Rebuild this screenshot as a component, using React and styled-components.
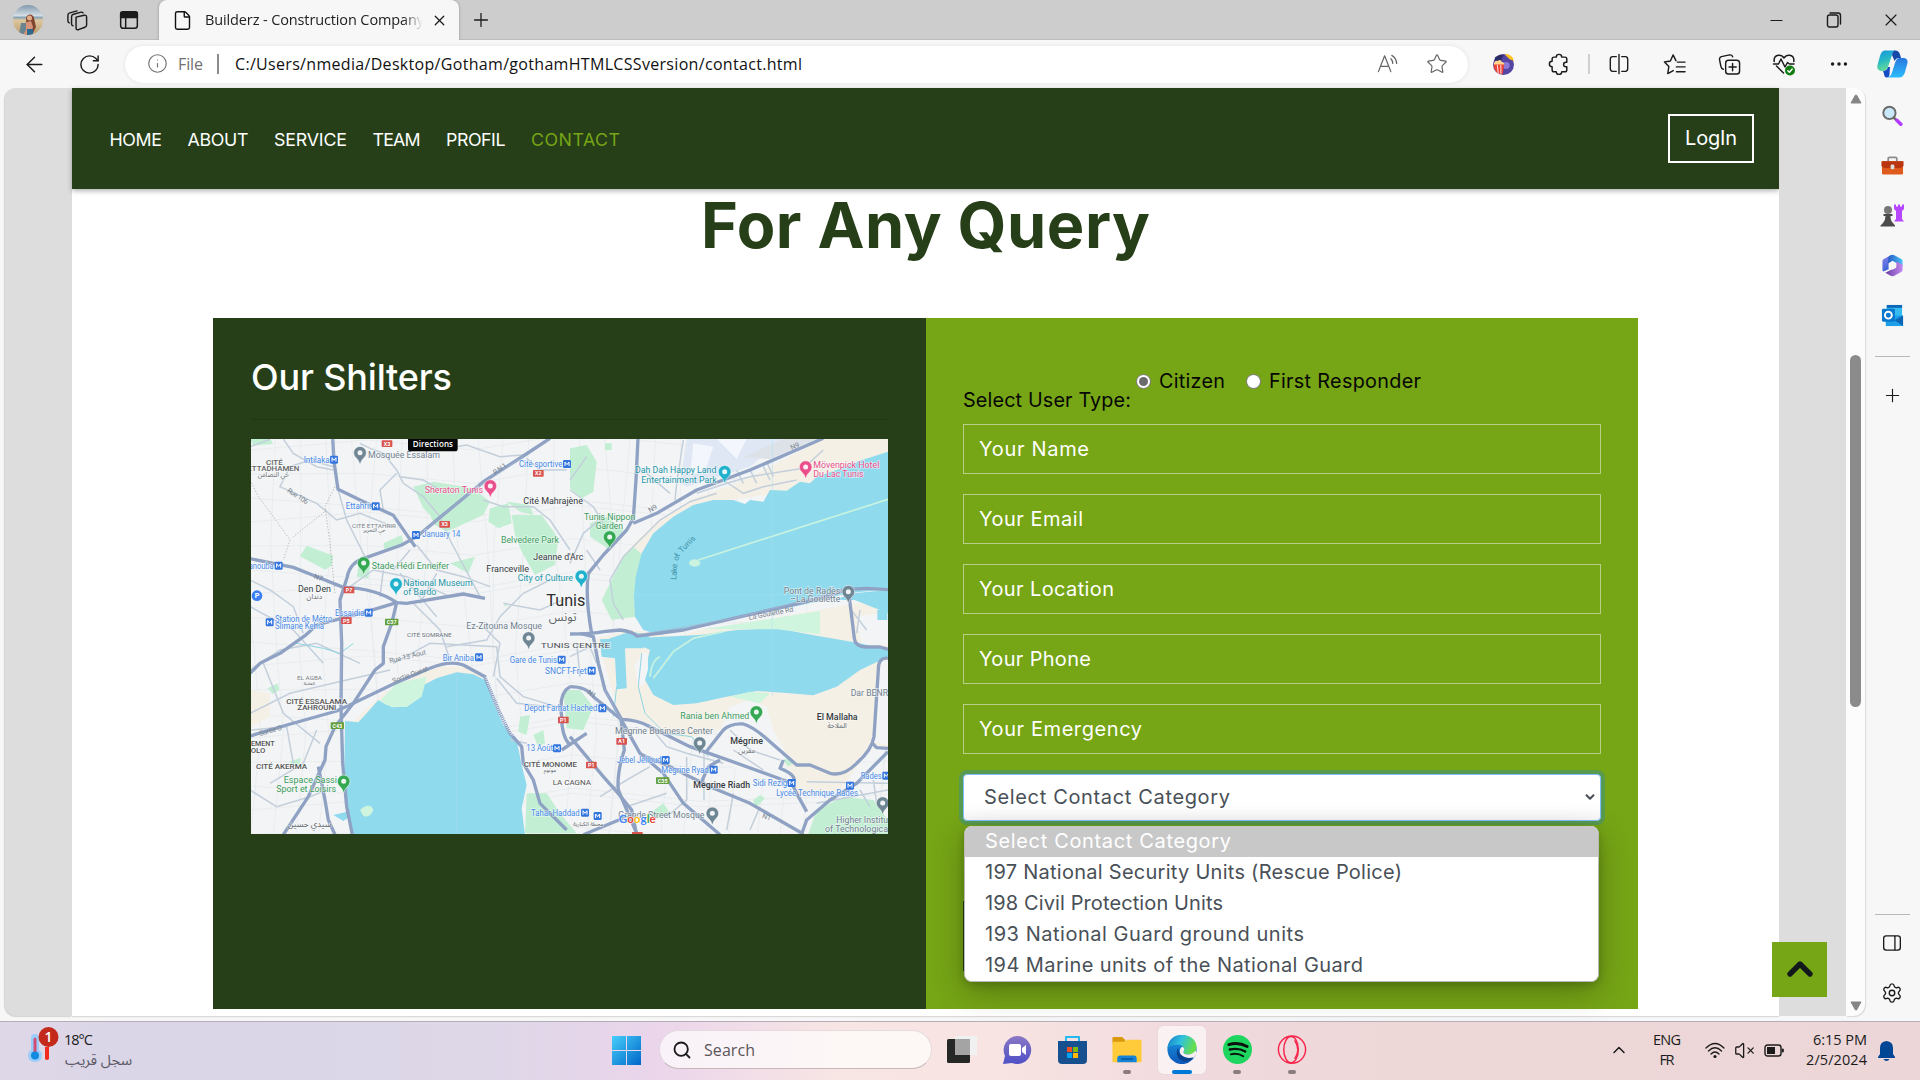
import React, { useLayoutEffect, useRef, useState } from "react";
import styled, { createGlobalStyle } from "styled-components";
import {
  ArrowLeft, RotateCw, Info, Star, Plus, X, File, Search, ChevronUp, ChevronDown,
  VolumeX, Settings, Minus, Ellipsis,
} from "lucide-react";

const GREEN = "#76a516";
const DARK = "#263f18";
const UI = `"Open Sans", "Noto Sans", "DejaVu Sans", sans-serif`;
const BRAND = `Inter, "Open Sans", sans-serif`;

const Global = createGlobalStyle`
  * { box-sizing: border-box; }
  body { margin: 0; overflow: hidden; background: #f7f7f7; font-family: ${UI}; }
`;

/* ---------- text tracked to a known measure ---------- */
const Tracked = styled.span`
  display: block;
  flex: none;
  white-space: nowrap;
  font-family: ${(p) => (p.$ui ? UI : BRAND)};
  font-size: ${(p) => p.$size}px;
  font-weight: ${(p) => p.$weight || 400};
  color: ${(p) => p.$color || "inherit"};
  line-height: ${(p) => p.$lh || 30}px;
`;
function Text({ children, w, ...rest }) {
  const ref = useRef(null);
  const [ls, setLs] = useState(0);
  useLayoutEffect(() => {
    const range = document.createRange();
    range.selectNodeContents(ref.current);
    const natural = range.getBoundingClientRect().width;
    setLs((w - natural) / (String(children).length - 1));
  }, [children, w]);
  return (
    <Tracked ref={ref} {...rest} style={{ letterSpacing: `${ls}px`, width: `${w}px` }}>
      {children}
    </Tracked>
  );
}

/* ---------- window frame ---------- */
const Screen = styled.div`
  width: 1920px; height: 1080px; display: flex; flex-direction: column; overflow: hidden;
`;
const TabStrip = styled.div`
  height: 40px; background: #cdcdcd; display: flex; align-items: center; color: #111;
  box-shadow: inset 0 -1px 0 #bdbdbd;
`;
const Slot = styled.div`
  width: ${(p) => p.$w}px; height: ${(p) => p.$h || 40}px; flex: none;
  display: flex; align-items: center; justify-content: center; color: ${(p) => p.$color || "#1b1b1b"};
`;
const ActiveTab = styled.div`
  width: 300px; height: 40px; background: #f7f7f7; border-radius: 8px 8px 0 0; display: flex; align-items: center;
  padding-left: 13px; box-shadow: 0 0 3px rgba(0,0,0,.3); clip-path: inset(-4px -4px 0 -4px);
`;
const TabTitle = styled.div`
  width: 220px; margin-left: 12px; overflow: hidden; mask-image: linear-gradient(90deg, #000 90%, transparent 99%);
`;
const Grow = styled.div`flex: 1;`;
const Toolbar = styled.div`
  height: 48px; background: #f7f7f7; display: flex; align-items: center; padding-left: 7px;
`;
const Address = styled.div`
  width: 1343px; height: 37px; margin-left: 8px; background: #fff; border-radius: 19px; display: flex; align-items: center;
  padding: 0 0 1px 22px; box-shadow: 0 0 4px rgba(0,0,0,.09);
`;
const VLine = styled.div`
  width: 2px; height: 20px; flex: none; background: ${(p) => p.$color}; margin: ${(p) => p.$m};
`;
const Workspace = styled.div`height: 933px; display: flex; background: #f7f7f7; padding-left: 5px;`;
const Gutter = styled.div`
  width: 67px; height: 928px; background: #ddd; border-radius: ${(p) => (p.$left ? "10px 0 0 12px" : "0")};
  box-shadow: ${(p) => (p.$left ? "-1px 1px 1px #d3d3d3" : "none")};
`;
const Page = styled.main`width: 1707px; height: 928px; background: #fff; box-shadow: 0 1px 1px #d9d9d9;`;
const ScrollTrack = styled.div`
  width: 19px; height: 928px; background: #fcfcfc; border-radius: 0 10px 12px 0; box-shadow: 1px 1px 1px #d9d9d9;
  display: flex; flex-direction: column; align-items: center; padding: 6px 0 5px;
`;
const Thumb = styled.div`width: 11px; height: 352px; border-radius: 6px; background: #8b8b8b; margin: 251px 0 auto;`;
const Side = styled.aside`
  width: 55px; height: 933px; display: flex; flex-direction: column; align-items: center; padding: 2px 1px 3px 0;
`;
const SideLine = styled.div`width: 35px; height: 1px; flex: none; background: #b9b9b9; margin: ${(p) => p.$m};`;

/* ---------- site ---------- */
const SiteHeader = styled.header`
  height: 101px; background: ${DARK}; color: #fff; display: flex; align-items: center; justify-content: space-between;
  padding: 2px 25px 0 37.5px; box-shadow: 0 2px 5px rgba(0,0,0,.3);
`;
const Nav = styled.nav`display: flex; gap: 25.5px;`;
const Login = styled.button`
  width: 86px; height: 49px; border: 2px solid #fff; background: none; color: #fff; padding: 0 0 2px; margin-bottom: 2px;
  display: flex; align-items: center; justify-content: center;
`;
const Heading = styled.div`height: 129px; display: flex; justify-content: center;`;
const Panels = styled.div`width: 1425px; height: 691px; margin-left: 141px; display: grid; grid-template-columns: 713px 712px;`;
const Shelters = styled.section`background: ${DARK}; color: #fff; padding: 37px 37px 0 38px;`;
const Rule = styled.div`height: 1px; background: rgba(0,0,0,.1); margin: 20px 0 19px;`;
const FormPanel = styled.section`background: ${GREEN}; padding: 48px 37px 0; color: #060606;`;
const UserType = styled.div`height: 58px; display: flex; align-items: flex-start;`;
const Lowered = styled.div`padding-top: 19px; margin-right: 4px;`;
const Radio = styled.i`
  width: 15px; height: 15px; border-radius: 50%; border: 1px solid #767676; background: #fff; margin: 8px 8px 0 0;
  display: grid; place-items: center;
  &::after { content: ""; width: 9px; height: 9px; border-radius: 50%; background: ${(p) => (p.$on ? "#6b6b6b" : "#fff")}; }
`;
const Gap = styled.div`width: ${(p) => p.$w}px; flex: none;`;
const Field = styled.div`
  height: 50px; border: 1px solid rgba(255,255,255,.48); margin-bottom: 20px; padding-left: 15px; color: #fff;
  display: flex; align-items: center;
`;
const Select = styled.div`
  height: 47px; background: #fff; border: 1px solid #80bdff; border-radius: 4px; box-shadow: 0 0 0 4px rgba(0,123,255,.25), inset 0 -14px 14px -10px rgba(0,0,0,.05);
  position: relative; display: flex; align-items: center; justify-content: space-between; padding: 0 3px 1px 20px; color: #495057;
`;
const Menu = styled.div`
  position: absolute; left: 0; top: 51px; width: 635px; height: 156px; border-radius: 8px; background: #fff; overflow: hidden; z-index: 2;
  border: 1px solid #b9b9b9; border-top: 0;
`;
const MenuShadow = styled.div`
  position: absolute; left: 0; top: 51px; width: 635px; height: 156px; border-radius: 8px; z-index: 1;
  box-shadow: 0 10px 32px rgba(0,0,0,.26), 0 3px 8px rgba(0,0,0,.16);
`;
const Option = styled.div`
  height: 31px; padding-left: 20px; background: ${(p) => (p.$on ? "#c8c8c8" : "#fff")}; color: ${(p) => (p.$on ? "#fff" : "#495057")};
`;
const Submit = styled.div`width: 200px; height: 70px; margin-top: 80px; background: ${DARK};`;
const BackTop = styled.button`
  position: absolute; left: 1772px; top: 942px; width: 55px; height: 55px; border: 0; padding: 0 0 2px; background: ${GREEN};
  display: grid; place-items: center; color: #12181b;
`;

/* ---------- taskbar ---------- */
const Taskbar = styled.footer`
  height: 59px; border-top: 1px solid #b3aeb8; position: relative; z-index: 3; display: flex; align-items: stretch; color: #1b1b1b;
  background: linear-gradient(90deg, #ded7e8 0, #dad6e7 8%, #ddd7e8 25%, #ead5eb 34%, #f8e6e4 44%, #f8e4e2 52%, #f1dadf 62%, #edd7d7 72%, #ecd6d7 100%);
`;
const Weather = styled.div`width: 612px; display: flex; padding: 5px 0 0 28px;`;
const WeatherText = styled.div`padding-top: 2px;`;
const Arabic = styled.div`font: 400 14.5px/20px "Noto Sans Arabic", "DejaVu Sans", sans-serif; color: #5b5966; direction: rtl; width: 68px; white-space: nowrap;`;
const SearchBox = styled.div`
  width: 273px; height: 39px; margin: 8px 4px 0 18px; border-radius: 20px; background: rgba(255,255,255,.68);
  border: 1px solid rgba(190,165,175,.35); border-bottom-color: #c9b6bb; display: flex; align-items: center; padding-left: 12px;
`;
const AppIcon = styled.div`
  width: 48px; height: 48px; margin: 4px 7px 0 0; border-radius: 5px; display: flex; flex-direction: column; align-items: center; padding-top: 9px;
  background: ${(p) => (p.$active ? "rgba(255,255,255,.6)" : "none")};
  box-shadow: ${(p) => (p.$active ? "0 0 1px #c5aeb4" : "none")};
`;
const Dot = styled.i`
  width: ${(p) => (p.$active ? 20 : 8)}px; height: 4px; border-radius: 2px; background: ${(p) => (p.$active ? "#0078d7" : "#8b7c80")};
  margin-top: 6px;
`;
const Stack = styled.div`
  display: flex; flex-direction: column; align-items: ${(p) => p.$align || "center"}; padding-top: 8px; width: ${(p) => p.$w}px;
`;

/* ---------- small drawings ---------- */
const Svg = ({ w = 24, h = w, vb = "0 0 24 24", children, sw = 1.4 }) => (
  <svg width={w} height={h} viewBox={vb} fill="none" stroke="currentColor" strokeWidth={sw} strokeLinecap="round" strokeLinejoin="round">
    {children}
  </svg>
);
const N = { stroke: "none" };
const Avatar = () => (
  <Svg w={30} vb="0 0 30 30">
    <defs>
      <clipPath id="av"><circle cx="15" cy="15" r="15" /></clipPath>
      <linearGradient id="avs" x2="0" y2="1"><stop stopColor="#8198ae" /><stop offset=".35" stopColor="#d3dde3" /><stop offset=".42" stopColor="#86a3b5" /><stop offset=".5" stopColor="#ddc8a0" /><stop offset="1" stopColor="#b99a6d" /></linearGradient>
    </defs>
    <g clipPath="url(#av)" {...N}>
      <rect width="30" height="30" fill="url(#avs)" />
      <path d="M13 13c2-5 7-4 8 0l2 9-3 6h-6z" fill="#80452f" /><circle cx="16.5" cy="13" r="2.5" fill="#e4ae8b" />
      <path d="M11 18l7-2 2 6-3 8h-6z" fill="#d6957a" /><path d="M8 18h5v7l-3 5H6z" fill="#6b8590" /><path d="M14 24h6v6h-6z" fill="#2d6a8d" />
    </g>
  </Svg>
);
const Workspaces = () => (
  <Svg w={23}><path d="M10.5 8.5L19 6.5q2.5-.5 2.5 2v8.2q0 1.8-1.8 2.3l-6.7 2.6q-2.5.7-2.5-2zM7.3 17.5q-1.5 0-1.5-2V8q0-2 2-2.5l8-2.2q1.4-.2 2 .8M3.5 14.5Q2 14.300 2 12.500V6.500q0-2 2-2.500l7.500-2" strokeWidth="1.5" /></Svg>
);
const TabMenu = () => (
  <Svg w={20} sw={1.8}><rect x="2" y="2.500" width="20" height="19.500" rx="3" /><path d="M2 4q0-2 3-2h14q3 0 3 2v5H2z" fill="currentColor" /><path d="M8 9v12" /></Svg>
);
const ReadAloud = () => (
  <Svg w={23} sw={1.3}><path d="M2.500 20.500L9 4l6.500 16.500M5 15h8M15.500 7q2 2 2 5M16.500 3.500q5 3 5 8.500" /></Svg>
);
const ExtLogo = () => (
  <Svg w={21}><g {...N}><circle cx="12" cy="12" r="12" fill="#5546a4" /><path d="M14 0q8 0 10 8l-5-2-5-5z" fill="#ffc31f" /><path d="M2 4q5-4 10-3L9 8l-6 1z" fill="#2b2b66" /><circle cx="15" cy="13" r="4" fill="#8c7bd9" /><path d="M1 11h12l-2 12q-8 0-10-8z" fill="#ef4136" /><path d="M1 11q1-4 4-3 4-3 5 1 3 0 3 3H1z" fill="#ffd48d" /><path d="M5 13l1 9M9 13v9" stroke="#fff" strokeWidth="1" /></g></Svg>
);
const Extensions = () => (
  <Svg w={22} sw={1.6}><path d="M9 4.500a3 3 0 0 1 6 0h3.500q2 0 2 2V10h-1a2.500 2.500 0 0 0 0 5h1v3.500q0 2-2 2H15a3 3 0 0 1-6 0H6.500q-2 0-2-2V15a3 3 0 0 1 0-6V6.500q0-2 2-2z" /></Svg>
);
const Split = () => (
  <Svg w={22} sw={1.5}><path d="M9 4H5Q2.500 4 2.500 7v10q0 3 2.500 3h4M15 4h4q2.500 0 2.500 3v10q0 3-2.500 3h-4M12 1.500v21" /></Svg>
);
const Favs = () => (
  <Svg w={23} sw={1.5}><path d="M13.500 8L10.500 2 7.700 8.400 1.500 9.400l4.600 4.700L5 21.500l5.700-3.200M15 9.500h8M14 14.500h9M14 19.500h9" /></Svg>
);
const Collections = () => (
  <Svg w={23} sw={1.5}><rect x="8" y="7.500" width="14.500" height="14.500" rx="3" /><path d="M15.200 11v7.500M11.500 14.700H19M5.500 17Q3.500 16.500 3 14L1.600 7Q1.300 4.500 3.600 3.800L12 2q2.500-.3 3.300 2" /></Svg>
);
const Heart = () => (
  <Svg w={24} sw={1.5}><path d="M2.200 9.500Q1.500 4 6.500 3.300 10 3 12 6q2-3 5.500-2.700 5 .7 4.300 6.200M4.500 14l7 7M1.500 12h5l2.500-5 4 8 2.500-4.500L17.500 12H22" /><circle cx="18" cy="18.500" r="5" fill="#107c10" stroke="none" /><path d="M15.800 18.700l1.600 1.500 2.800-3.200" stroke="#fff" /></Svg>
);
const Copilot = () => (
  <Svg w={31} h={28} vb="0 0 31 28">
    <defs>
      <linearGradient id="c1" x2=".3" y2="1"><stop stopColor="#1494df" /><stop offset=".5" stopColor="#27b7c5" /><stop offset="1" stopColor="#65db96" /></linearGradient>
      <linearGradient id="c2" x2="0" y2="1"><stop stopColor="#2777dc" /><stop offset="1" stopColor="#2bbcff" /></linearGradient>
    </defs>
    <g {...N}>
      <path d="M22 8h5q4 .5 3.500 5l-2.500 9q-1.500 5.500-6 5.500H9.500q4 0 5.500-5l3.500-11q1-3 3.500-3.500z" fill="url(#c2)" />
      <path d="M8 .5h11q-3 .5-4 4.500l-4 12q-1 4-5 4H3.500Q-.5 20 .5 15l2.500-9Q4.500.5 8 .5z" fill="url(#c1)" />
      <path d="M18 .5q4 0 5 4l1 3.500h-2q-3 0-4.500 3L15 5q1-4.500 3-4.500z" fill="#1747a8" />
      <path d="M6 21q4 0 5-4l2 0-.5 7q0 3.500-3 3.500-2 0-2.500-3.500z" fill="#174cc5" />
    </g>
  </Svg>
);
const MagColor = () => (
  <Svg w={21}><circle cx="8.500" cy="9" r="7" fill="#c9e9fb" stroke="#6c6c6c" strokeWidth="2.200" /><path d="M14 15l1.500 1.500" stroke="#666" strokeWidth="3" /><path d="M17 17.500l4.500 4.500" stroke="#b438ff" strokeWidth="4" /></Svg>
);
const Toolbox = () => (
  <Svg w={23}><path d="M7.500 8V5q0-1.500 1.500-1.500h6q1.500 0 1.500 1.500v3" stroke="#8b8b8b" strokeWidth="1.800" /><g {...N}><rect x="1" y="7.500" width="22" height="14" rx="1.500" fill="#de5a1d" /><path d="M.500 7.500h23v5l-3 2h-17l-3-2z" fill="#b93610" /><rect x="10" y="11" width="4" height="5" rx="1.500" fill="#ddd" /></g></Svg>
);
const Games = () => (
  <Svg w={24}><g {...N}><path d="M14 1.500h2v2h2v-2h2v2h2v-2h2V6l-2 2v8l2 2.500H14L16 16V8l-2-2z" fill="#b646ff" /><circle cx="8" cy="7" r="4" fill="#777" /><path d="M3.500 11h9v2h-2q0 5 2.500 7l2 2.500v1H.500v-1L3 20q2.500-3 2.500-7h-2z" fill="#4b4b4b" /></g></Svg>
);
const M365 = () => (
  <Svg w={23}>
    <defs>
      <linearGradient id="m1" x2="1"><stop stopColor="#2b5cc4" /><stop offset="1" stopColor="#45c4f7" /></linearGradient>
      <linearGradient id="m2" x2="1"><stop stopColor="#6a3fa8" /><stop offset="1" stopColor="#c38bf0" /></linearGradient>
      <linearGradient id="m3" x2=".4" y2="1"><stop stopColor="#8f86e8" /><stop offset="1" stopColor="#3a62d8" /></linearGradient>
    </defs>
    <g {...N}>
      <path d="M11 .8L2.500 5.600Q1.500 6.200 1.500 7.500v9.300q0 1 1 1.500L8 16V9.500z" fill="url(#m3)" />
      <path d="M9.500 1.500q2.500-1.400 5 0l7 4q1 .7 1 2V13l-7-4-3.500-2-4.500 3V4.500q0-2 2-3z" fill="url(#m1)" />
      <path d="M22.500 11v5.500q0 1.300-1 2l-7 4q-2.500 1.500-5 0l-5-3 7-3.500 4.500-3V7.800z" fill="url(#m2)" />
      <path d="M12 7.700l3.800 2.200v4.400L12 16.500l-3.800-2.200V9.900z" fill="#f7f7f7" />
    </g>
  </Svg>
);
const Outlook = () => (
  <Svg w={23}><g {...N}><rect x="6" y="1" width="16" height="15" rx="1" fill="#35bdf2" /><path d="M6 1h16v3H6z" fill="#0d69b8" /><path d="M5 12l18 0v11H5z" fill="#1ca0e8" /><path d="M23 12v11l-9-6z" fill="#0b67b5" /><rect x="1" y="5" width="13.500" height="13.500" rx="1.500" fill="#0877cf" /></g><circle cx="7.700" cy="11.700" r="3.600" stroke="#fff" strokeWidth="2" /></Svg>
);
const SidePanel = () => (
  <Svg w={20} sw={1.6}><rect x="2" y="3.500" width="20" height="17" rx="3" /><path d="M15.500 4v16" /></Svg>
);
const Therm = () => (
  <Svg w={32} h={36} vb="0 0 32 36">
    <g {...N}><path d="M3 11q0-4 4-4t4 4v12q3 2 3 5.500Q14 35 7 35T0 28.500Q0 25 3 23z" fill="#9bcdfb" /><path d="M5.500 12q1.500-3 3 0v13h-3z" fill="#d04c72" /><circle cx="7" cy="28.500" r="4" fill="#0e8ae0" /><path d="M17 20h4v12q-2 2-4 0z" fill="#f22b1f" /><circle cx="20.500" cy="10" r="10" fill="#c32a1b" /></g>
    <text x="20.500" y="15" textAnchor="middle" fontFamily="Open Sans" fontSize="14" fontWeight="600" fill="#fff" stroke="none">1</text>
  </Svg>
);
const Windows = () => (
  <Svg w={29} vb="0 0 29 29"><defs><linearGradient id="wn" x2="1" y2="1"><stop stopColor="#46cefa" /><stop offset="1" stopColor="#0066c8" /></linearGradient></defs><path {...N} fill="url(#wn)" d="M0 0h14v14H0zM15 0h14v14H15zM0 15h14v14H0zM15 15h14v14H15z" /></Svg>
);
const TaskView = () => (
  <Svg w={30} vb="0 0 30 30"><g {...N}><rect x="0" y="4" width="23" height="24" rx="1.500" fill="#262827" /><rect x="8" y="1" width="22" height="19" rx="1.500" fill="#f1f1f1" /><path d="M8 4h15v16H8z" fill="#a4a4a4" /></g></Svg>
);
const Chat = () => (
  <Svg w={30} vb="0 0 30 30"><defs><linearGradient id="ch" x2="0" y2="1"><stop stopColor="#8b78c5" /><stop offset="1" stopColor="#4e50c6" /></linearGradient></defs><g {...N}><path d="M15 1a14 14 0 1 1-5 27l-9 1 2-8A14 14 0 0 1 15 1z" fill="url(#ch)" /><rect x="7" y="9" width="12" height="12" rx="2" fill="#fff" /><path d="M20 13l4-3v10l-4-3z" fill="#fff" /></g></Svg>
);
const Store = () => (
  <Svg w={30} vb="0 0 30 30"><path d="M9 7V2h13v5" stroke="#24b9ef" strokeWidth="2" /><g {...N}><path d="M1 6h29v19q0 4-4 4H5q-4 0-4-4z" fill="#16508e" /><path fill="#f25022" d="M10 12h5v5h-5z" /><path fill="#7fba00" d="M16 12h5v5h-5z" /><path fill="#00a4ef" d="M10 18h5v5h-5z" /><path fill="#ffb900" d="M16 18h5v5h-5z" /></g></Svg>
);
const Folder = () => (
  <Svg w={30} vb="0 0 30 30"><g {...N}><path d="M0 3q0-1 1-1h9l3 3v4H0z" fill="#d9990c" /><path d="M0 7h12l3-2h14q1 0 1 1v21q0 1-1 1H1q-1 0-1-1z" fill="#ffcb3b" /><path d="M5 28v-4q0-3 3-3h14q3 0 3 3v4z" fill="#1384d7" /><path d="M9 24h12v1.500H9z" fill="#075495" /></g></Svg>
);
const Edge = () => (
  <Svg w={30} vb="0 0 30 30">
    <defs><linearGradient id="e1" x2="1" y2=".3"><stop stopColor="#1679c4" /><stop offset=".5" stopColor="#2fc1df" /><stop offset="1" stopColor="#65df4c" /></linearGradient><linearGradient id="e2" x2="0" y2="1"><stop stopColor="#1d9be2" /><stop offset="1" stopColor="#0b57b8" /></linearGradient></defs>
    <g {...N}>
      <circle cx="15" cy="15" r="15" fill="url(#e2)" />
      <path d="M0 13Q2 0 15 0q14 1 15 12 0 8-9 8-6 0-4-4 1-6-7-6-6 0-10 3z" fill="url(#e1)" />
      <path d="M17 16q-2 4 4 4 5 0 8-4l1 3-3 5-5 0q-7-1-9-5-1-5 2-7 3 1 2 4z" fill="#f8eff1" />
      <path d="M11 13q-4 8 3 13 7 4 13-3-6 2-11-1-5-3-5-9z" fill="#0a438f" />
    </g>
  </Svg>
);
const Spotify = () => (
  <Svg w={29} vb="0 0 30 30"><circle cx="15" cy="15" r="15" fill="#1ed65f" stroke="none" /><g stroke="#0b120d"><path d="M6 10q10-3 19 2" strokeWidth="3" /><path d="M7 15q9-2 16 2" strokeWidth="2.500" /><path d="M8 20q7-2 13 2" strokeWidth="2" /></g></Svg>
);
const Opera = () => (
  <Svg w={30} vb="0 0 30 30" sw={1.5}><g stroke="#f8264c"><circle cx="15" cy="15" r="14" /><ellipse cx="14" cy="15" rx="7.500" ry="13.500" /><path d="M18 6q6 9 0 18" /></g></Svg>
);
const WifiGlyph = () => (
  <Svg w={20} h={17} vb="0 0 20 17" sw={1.3}><path d="M1 6q9-9 18 0M3.500 9q6.500-6.500 13 0M6 12q4-4 8 0" /><circle cx="10" cy="14.500" r="1.600" fill="currentColor" stroke="none" /></Svg>
);
const Battery = () => (
  <Svg w={20} h={13} vb="0 0 20 13" sw={1.4}><rect x="1" y="1" width="16" height="11" rx="2.500" /><rect x="3" y="3" width="8" height="7" fill="currentColor" stroke="none" /><path d="M18.800 5.500v2" strokeWidth="2" /></Svg>
);
const BellGlyph = () => (
  <Svg w={17} h={20} vb="0 0 17 20"><path {...N} fill="#004695" d="M8.500 0Q15 .5 15 7v6l2 3v1H0v-1l2-3V7Q2 .5 8.500 0zM5.500 18h6q-1 2-3 2t-3-2z" /></Svg>
);

/* ---------- map ---------- */
const WATER = "#90daee", PARK = "#c2efd3", SAND = "#f5f0e5", ROAD = "#8fa2c4", MINOR = "#c3cfdb";
const BLUE = "#4689e8", GRN = "#3c9b5b", TEAL = "#2396a8", PINK = "#ea4f8b", GREY = "#71818f", INK = "#353a40";

// [text, x, baseline, width, size, colour, weight]
const LABELS = [
  ["Mosquée Essalam", 354, 83, 216, 27, GREY], ["Intilaka", 161, 98, 78, 25, BLUE],
  ["CITÉ", 48, 106, 50, 21, "#666", 500], ["ETTADHAMEN", -8, 124, 156, 21, "#666", 500],
  ["Ettahrir", 287, 238, 78, 25, BLUE], ["CITÉ ETTAHRIR", 306, 293, 132, 18, "#7d858c"],
  ["January 14", 517, 322, 114, 26, BLUE], ["Sheraton Tunis", 524, 189, 175, 27, PINK],
  ["Cité sportive", 807, 111, 130, 25, BLUE], ["Cité Mahrajène", 820, 223, 179, 26, INK],
  ["Belvedere Park", 753, 340, 174, 26, GRN], ["Jeanne d'Arc", 850, 389, 150, 26, INK],
  ["Franceville", 709, 426, 128, 26, INK], ["City of Culture", 803, 454, 166, 26, TEAL],
  ["Stade Hédi Enneifer", 365, 417, 232, 27, GRN], ["National Museum", 460, 468, 208, 27, TEAL], ["of Bardo", 460, 494, 99, 27, TEAL],
  ["anouba", -4, 416, 75, 25, BLUE], ["Den Den", 144, 486, 99, 27, INK], ["Tunis", 889, 527, 117, 47, "#2c2c2c"],
  ["Station de Métro", 75, 575, 172, 25, BLUE], ["Slimane Kehia", 75, 598, 147, 25, BLUE],
  ["Essaidia", 255, 557, 88, 25, BLUE], ["Ez-Zitouna Mosque", 649, 597, 227, 27, GREY], ["CITÉ SOMRANE", 471, 620, 134, 18, "#6c747b"],
  ["Dah Dah Happy Land", 1155, 130, 244, 27, TEAL], ["Entertainment Park", 1174, 158, 226, 27, TEAL],
  ["Mövenpick Hotel", 1690, 113, 198, 26, PINK], ["Du Lac Tunis", 1690, 141, 151, 26, PINK],
  ["Tunis Nippon", 1002, 269, 154, 26, GRN], ["Garden", 1037, 298, 82, 26, GRN],
  ["Pont de Radès", 1601, 492, 170, 26, GREY], ["–La Goulette", 1621, 517, 150, 26, GREY],
  ["OLO", 2, 969, 44, 21, "#555", 500], ["EMENT", 3, 948, 71, 21, "#555", 500],
  ["CITÉ ESSALAMA", 109, 821, 182, 21, "#555", 500], ["ZAHROUNI", 142, 839, 117, 21, "#555", 500],
  ["EL AGBA", 141, 751, 75, 18, "#7b8084"], ["CITÉ AKERMA", 18, 1016, 153, 22, "#555", 500],
  ["Espace Sassi", 101, 1060, 160, 27, GRN], ["Sport et Loisirs", 79, 1086, 179, 27, GRN],
  ["Bir Aniba", 578, 692, 94, 25, BLUE], ["Gare de Tunis", 779, 698, 142, 25, BLUE], ["TUNIS CENTRE", 872, 654, 209, 24, "#50565c"],
  ["SNCFT-Fret", 885, 731, 125, 25, BLUE], ["Depot Farhat Hached", 823, 843, 219, 25, BLUE],
  ["13 Août", 829, 963, 80, 25, BLUE], ["CITÉ MONOME", 821, 1012, 160, 21, "#555", 500], ["LA CAGNA", 908, 1065, 115, 21, "#555"],
  ["Tahar Haddad", 843, 1157, 146, 25, BLUE], ["Rania ben Ahmed", 1291, 866, 207, 26, GRN],
  ["Megrine Business Center", 1095, 911, 294, 26, GREY], ["Mégrine", 1441, 943, 98, 26, INK, 500],
  ["El Mallaha", 1700, 869, 123, 26, INK, 500], ["Dar BENR", 1802, 798, 112, 26, GREY],
  ["Jebel Jelloud", 1101, 998, 133, 25, BLUE], ["Megrine Ryad", 1234, 1028, 142, 25, BLUE],
  ["Megrine Riadh", 1330, 1073, 170, 27, INK, 500], ["Sidi Rezig", 1508, 1067, 104, 25, BLUE],
  ["Lycée Technique Rades", 1579, 1098, 245, 25, BLUE], ["Rades", 1832, 1046, 63, 25, BLUE],
  ["Grande Street Mosque", 1105, 1164, 258, 26, GREY], ["Higher Institu", 1759, 1179, 155, 26, GREY], ["of Technologica", 1725, 1205, 189, 26, GREY],
];
const ARABIC = [
  ["حي التضامن", 70, 142, 19], ["دندان", 193, 508, 21], ["تونس", 938, 572, 36], ["حي التحرير", 373, 307, 16], ["الملاحة", 1761, 893, 21],
  ["مقرين", 1490, 968, 21], ["سيدي حسين", 178, 1190, 25], ["العقبة", 178, 765, 14], ["مونوم", 900, 1026, 17], ["محطة الكبارية", 1015, 1188, 17],
];
// metro stops
const STOPS = [[252, 89], [377, 229], [498, 315], [86, 407], [356, 548], [59, 577], [951, 102], [687, 682], [935, 689], [1025, 722], [1057, 835],
  [921, 955], [1247, 990], [1391, 1019], [1625, 1059], [1800, 1067], [1909, 1037], [1005, 1148], [1043, 1158]];
const SHIELDS = [["X3", 411, 41, "#d9534f"], ["X2", 865, 130, "#d9534f"], ["X3", 584, 283, "#d9534f"], ["P7", 297, 480, "#d9534f"], ["P5", 289, 572, "#d9534f"],
  ["C37", 425, 576, "#62a03e"], ["C43", 262, 887, "#62a03e"], ["P1", 940, 870, "#d9534f"], ["A1", 1115, 934, "#d9534f"], ["P1", 1024, 1005, "#d9534f"],
  ["C35", 1238, 1052, "#62a03e"]];
const PINS = [[330, 72, "#6f8795"], [721, 172, PINK], [341, 403, "#34a853"], [438, 466, "#20b2cc"], [1424, 129, "#20b2cc"], [1667, 115, PINK],
  [1079, 325, "#34a853"], [994, 443, "#20b2cc"], [1795, 489, "#6f8795"], [836, 628, "#6f8795"], [281, 1058, "#34a853"], [1519, 850, "#34a853"],
  [1349, 943, "#6f8795"], [1387, 1154, "#6f8795"], [1898, 1123, "#6f8795"]];
const MAJOR = [
  "M248 20L252 95 264 178 330 210 430 256 480 328 496 350", "M900 25L820 78 700 155 640 205 570 262 500 320 455 345 350 382Q300 395 292 440L270 510 275 640 273 830 278 1000 290 1130 307 1214",
  "M0 386L130 412 180 432 280 472 Q380 475 440 518L470 520 640 492 705 505", "M0 730L30 700 90 670 165 617 200 585 340 548 440 518 425 580 400 650 400 700 375 720 310 820 255 890 228 950 225 990 175 1100 100 1214",
  "M0 918L100 888 260 843 310 820 430 762 540 715Q600 690 640 705L708 742", "M205 1010L225 1110 235 1170 255 1214",
  "M1164 25L1158 150 1150 265 1130 300 1060 375 1015 430Q1005 500 1025 610", "M1720 25L1500 120 1340 180 1220 250 1150 280",
  "M960 612Q1030 612 1060 605L1110 600Q1150 605 1160 618L1300 600 1450 565 1700 508 1790 478 1850 475 1914 479", "M1795 480L1805 560 1813 625Q1815 648 1845 651L1890 651 1914 658",
  "M990 610L1030 620 1045 700 1065 780 1113 865 1123 960Q1100 1030 1105 1080L1160 1210", "M960 770Q1010 770 1030 800L1113 868 1170 970 1240 1030 1300 1120 1410 1214",
  "M960 770Q925 790 935 860 935 920 960 945M935 960L1010 910M960 920L1060 1040 1100 1085 1145 1140 1160 1215", "M1113 868Q1160 868 1200 890L1320 950 1420 985 1600 1050 1625 1060Q1650 1040 1590 1015L1600 990",
  "M1365 970L1420 900Q1440 880 1480 882 1510 890 1560 935L1640 1005 1680 1005 1740 1030Q1780 1040 1820 1000 1865 960 1872 920L1885 720Q1885 680 1914 685", "M1865 938L1880 953 1914 955",
  "M1170 972L1260 1010 1380 1070 1500 1120 1660 1212", "M1914 965L1820 1060 1740 1110 1670 1170 1655 1212", "M1625 1060L1640 1090 1670 1145", "M1355 1055L1375 1010 1410 990",
  "M705 742L750 850 780 910 815 950 820 1000 850 1050 870 1120 950 1200", "M1000 1214L1130 1160",
];
const MINORS = [
  "M0 50L60 28M100 27L130 70 200 110 250 120M330 40L360 55 400 70 440 120 460 160 520 200 570 260 600 330 690 500", "M264 178L290 270 350 390 M250 110L180 90 120 110 90 170 200 220 260 270 330 250 430 290",
  "M500 30L560 60 650 45 750 80 820 75M830 85L870 120 950 120M700 210L760 230 850 230 900 270 960 360M570 180L520 150 450 140", "M0 450L60 480 130 530 160 610M0 530L130 600 220 700 M300 470L370 420 470 440 600 500",
  "M490 520L570 600 600 690M440 130L390 180 400 240M500 345L560 420 640 440 720 470", "M0 720L90 660 200 640 330 700M40 700L100 850 210 940M0 850L120 790 290 750 420 720",
  "M60 1060L160 1000 200 900M0 900L110 890 130 1000M0 1080L80 1130 180 1100 230 1080M590 650L710 630 750 560 820 490 900 450", "M430 700L540 640 740 650 750 740 820 800 920 830",
  "M740 745L800 820 900 830M700 590L750 640 730 740M830 940L780 930M960 500L870 540 760 520M1400 190L1320 215 1230 270 1120 380 1080 450 1090 520 1120 570",
  "M1300 30L1280 160 1275 210M1190 130L1260 190M1060 260L1000 310 960 400M960 180L1030 230 1060 280M1010 80L960 150M1340 190L1430 160 1500 140 1660 115 1720 60",
  "M1420 150L1480 190 1540 170 1640 150M1460 120L1480 160M1500 120L1520 160M1540 110L1560 150M1550 95L1570 140", "M1200 890L1250 950 1310 970 1420 1000M1310 980L1310 1110 1250 1160M1362 970L1362 1110",
  "M1440 900L1500 960 1590 990M1450 960L1540 1020M1200 1010L1130 1050 1050 1100M1250 1090L1130 1130M1530 1130L1500 1200M1450 1090L1430 1200", "M1670 1055L1914 1060M1700 1120L1914 1080M1830 1080L1860 1130M1870 1050L1880 1120",
  "M960 680L1020 650 1040 700M980 640L990 740M1800 535L1850 600M1830 540L1820 610M1010 360L1050 420M400 420L390 500M450 430L560 560M560 430L510 520M480 360L430 420",
];
const streets = [];
for (let i = 0; i < 26; i++) {
  const x = i * 76;
  streets.push(`M${x} 27l${(i % 5) * 14 - 28} 310 ${40 - (i % 4) * 22} 320 20 250 -30 310`);
  if (i < 17) streets.push(`M0 ${60 + i * 72}l350 ${(i % 3) * 28 - 30} 320 30 300 -50 380 40 564 -20`);
}

const MapView = () => (
  <svg width="637" height="395" viewBox="3 27 1911 1185" fontFamily="Roboto, sans-serif" style={{ display: "block" }}>
    <rect x="0" y="0" width="1920" height="1220" fill="#f3f4f5" />
    <g stroke="#e7eaed" strokeWidth="2.500" fill="none">{streets.map((d, i) => <path key={i} d={d} />)}</g>
    <path fill="#dfe7f5" d="M1310 27H1600L1500 110 1310 170 1290 160z" /><path fill="#f3f6fc" d="M1330 40l60 10-20 60-50 30zM1400 27h90l-30 60z" />
    <path fill="#dde2e8" d="M1600 27h100l-140 60-80-5z" />
    <path fill={SAND} d="M1720 27H1914V170L1660 180 1400 215 1300 260 1180 380 1145 345 1230 270 1330 205 1450 165 1600 90z" />
    <path fill={SAND} d="M1040 625L1150 600 1280 620 1350 600 1710 540 1820 520H1914V955L1860 940 1820 1010 1770 1080 1640 1100 1620 1020 1500 900 1400 900 1300 930 1200 880 1110 860z" />
    <path fill="#f3f4f5" d="M1440 830l60-20 50 20 20 70 50 90-90 60-160-80 40-70zM1890 690l24-5v260l-40-10zM1820 560l94-15v100l-80 4z" />
    <path fill={SAND} d="M285 900L400 790 550 710 650 710 705 740 600 760 300 910zM0 780l60 10v70l-60 30z" />
    <g fill={PARK}>
      <path d="M490 170l60-15 120 20 50 40-20 40-110 50-35-20-15-30-20-20zM720 235l55-15 10 60-40 15-30-20zM770 215l70 10 10 30-40-10zM785 255l90 0 50 70-10 80-60 30-40-70-20-50z" />
      <path d="M600 400l75-20-20 50zM170 347l80 30-5 30-20 12-75-40zM400 340l55-25 5 25-55 25zM325 410h35l-5 35-35-5zM0 27h60l10 15-60 5z" />
      <path d="M960 55l50-10 30 50-10 90-35 20-35-30zM1065 40h20v20h-20zM1020 280l50-20 50 40-40 60-60-40zM1120 380l30-30 45 40-40 170-70 10-30-60z" />
      <path d="M810 860l30-5-10 60-25-10zM850 915l30-15 5 40-20 10zM940 780l50 0 40 50-30 70-50-5zM830 1090l60 0 40 60 50 60H825zM53 775l30-15 5 20-20 12zM118 995l35-12-5 20-20 7z" />
      <path d="M1700 1140l80-40 90 10 44 60v44h-240zM1600 990l20-10 15 15-20 15zM1510 1110l20-15 15 10-30 30zM1200 1150l40-30 20 30-50 20zM760 525l10-5v10z" />
    </g>
    <g fill={WATER}>
      <path d="M1914 65L1820 95 1760 120 1700 140 1680 160 1650 155 1610 182 1560 180 1540 215 1500 210 1485 222 1450 210 1390 210 1330 225 1270 260 1210 310 1175 370 1157 440 1152 500 1155 560 1180 600 1230 615 1300 600 1700 515 1790 490 1914 478z" />
      <path d="M1050 628L1210 622 1300 617 1350 615 1460 600 1580 595 1700 617 1830 640 1914 660V680L1830 720 1760 770 1690 796 1600 788 1520 783 1430 800 1340 820 1270 825 1210 795 1180 740 1200 660 1180 650 1125 655 1130 775 1100 778 1095 685 1055 680z" />
      <path d="M285 873L325 877 350 850 385 810 410 825 470 830 505 805 520 765 560 745 620 727 670 733 705 750 730 815 760 885 800 930 815 1005 830 1065 815 1135 825 1215H310L290 1115 283 1015z" />
      <path d="M1750 510l60-20 104-10v70l-100-40zM1080 625l60-20 60 10-20 40-120 0zM250 1155l50-12 10 10-30 20zM1882 540h30v30h-30z" />
    </g>
    <path fill="#d0f5df" d="M390 812L440 760 530 740 515 800 470 830 425 832zM330 1140q30-25 40 0-10 25-30 18zM1360 598l350-55v70l-130-15-100 0zM1440 800l60-15 60 5-30 30z" />
    <path d="M1200 740q5-50 30-60M1210 745l60-80 60-40 90-20M1345 390L1914 208" stroke="#c9f3df" strokeWidth="5" fill="none" />
    <ellipse cx="1334" cy="399" rx="17" ry="11" fill="#c9f3df" /><path d="M1567 27V800M620 730V1212M1150 495H1600" stroke="#a4dff0" strokeWidth="1.500" />
    <path fill="#f3f4f5" d="M1180 668h14v50l-14 50-16 0-12-60z" />
    <g stroke={MINOR} strokeWidth="4.500" fill="none">{MINORS.map((d, i) => <path key={i} d={d} />)}</g>
    <path d="M0 150l25 50 45 60 50 70-20 60M255 170l-30 60 15 110 15 150M230 240l-100 80" stroke="#9b9b9b" strokeWidth="2" strokeDasharray="4 5" fill="none" />
    <path d="M140 640l80 15 50 15 40-30M1100 770l-10 90M1175 670l-10 100 20 80 60 60 80 10 50 60" stroke="#8fd5e3" strokeWidth="3" fill="none" />
    <g stroke={ROAD} strokeWidth="10" fill="none" strokeLinejoin="round">{MAJOR.map((d, i) => <path key={i} d={d} />)}</g>
    <path d="M250 20l4 75M820 78L640 205 500 320M273 510v320M1790 478L1450 565 1160 615M1113 868l-50-90" stroke="#a6b7d3" strokeWidth="2" fill="none" />
    <path d="M708 742l45 115 35 60" stroke="#fff" strokeWidth="9" strokeDasharray="2 4" fill="none" />
    <g fill="#77828d" fontSize="21">
      <text transform="translate(110 185) rotate(33)" textLength="70">Rue 106</text><text transform="translate(735 135) rotate(-35)" textLength="45">RN1</text>
      <text transform="translate(420 700) rotate(-14)" textLength="112">Rue 13 Aout</text><text transform="translate(430 760) rotate(-20)" textLength="112">Sortie Ouest</text>
      <text transform="translate(30 918) rotate(-16)" textLength="70">Sortie O</text><text transform="translate(1498 570) rotate(-11)" textLength="135">La Goulette Rd</text>
      <text transform="translate(1625 60) rotate(-24)">N9</text><text transform="translate(1200 248) rotate(-30)">N9</text><text transform="translate(190 445) rotate(20)">N7</text>
      <text transform="translate(1010 790) rotate(35)">N1</text><text transform="translate(1535 1163) rotate(20)">N1</text>
    </g>
    <g fill="#3b92a8" fontSize="24">
      <text transform="translate(1279 450) rotate(-87)" textLength="48">Lake</text>
      <text transform="translate(1284 394) rotate(-72)">of</text>
      <text transform="translate(1295 370) rotate(-45)" textLength="60">Tunis</text>
    </g>
    <g stroke="#f8fafb" strokeWidth="4" paintOrder="stroke" strokeOpacity=".65">
      {LABELS.map(([t, x, y, w, s, c, b], i) => (
        <text key={i} x={x} y={y} textLength={w} lengthAdjust="spacingAndGlyphs" fontSize={s} fill={c} fontWeight={b || 400}>{t}</text>
      ))}
      {ARABIC.map(([t, x, y, s], i) => <text key={i} x={x} y={y} fontSize={s} fill="#5d646a" textAnchor="middle" fontFamily="Noto Sans Arabic, DejaVu Sans">{t}</text>)}
    </g>
    {STOPS.map(([x, y], i) => (
      <g key={i}><rect x={x - 12} y={y - 12} width="24" height="24" rx="4" fill="#3275df" /><path d={`M${x - 6} ${y + 6}v-12l6 8 6-8v12`} stroke="#fff" strokeWidth="3" fill="none" /></g>
    ))}
    {SHIELDS.map(([t, x, y, c], i) => (
      <g key={i}><rect x={x - (t.length > 2 ? 20 : 16)} y={y - 10} width={t.length > 2 ? 40 : 32} height="20" rx="2" fill={c} /><text x={x} y={y + 6} fontSize="16" fontWeight="700" fill="#fff" textAnchor="middle">{t}</text></g>
    ))}
    <rect x="1146" y="1206" width="32" height="8" fill="#d9534f" />
    {PINS.map(([x, y, c], i) => (
      <g key={i}><path d={`M${x} ${y + 31}q-4-14-12-20a19 19 0 1 1 24 0q-8 6-12 20z`} fill={c} stroke="#fff" strokeWidth="1.500" /><circle cx={x} cy={y - 4} r="7.500" fill="#fff" opacity=".9" /></g>
    ))}
    <circle cx="21" cy="497" r="16" fill="#3c7ff0" /><text x="21" y="505" fontSize="22" fontWeight="700" fill="#fff" textAnchor="middle">P</text>
    <text x="1106" y="1178" fontSize="35" fontFamily="Lato, sans-serif" fontWeight="700" stroke="#fff" strokeWidth="3" paintOrder="stroke">
      <tspan fill="#4285f4">G</tspan><tspan fill="#ea4335">o</tspan><tspan fill="#fbbc05">o</tspan><tspan fill="#4285f4">g</tspan><tspan fill="#34a853">l</tspan><tspan fill="#ea4335">e</tspan>
    </text>
    <path d="M474 20h149v36q0 8-8 8H482q-8 0-8-8z" fill="#060606" />
    <text x="488" y="51" fontSize="24" fontWeight="600" fontFamily="Open Sans" fill="#fff" textLength="121">Directions</text>
  </svg>
);

const NAV = [["HOME", 52.5], ["ABOUT", 61], ["SERVICE", 73], ["TEAM", 48], ["PROFIL", 59.5], ["CONTACT", 89]];
const FIELDS = [["Your Name", 110], ["Your Email", 104], ["Your Location", 135], ["Your Phone", 112], ["Your Emergency", 163]];
const OPTIONS = [
  ["Select Contact Category", 246], ["197 National Security Units (Rescue Police)", 417], ["198 Civil Protection Units", 238],
  ["193 National Guard ground units", 319], ["194 Marine units of the National Guard", 378],
];
const APPS = [[TaskView], [Chat], [Store], [Folder, "run"], [Edge, "active"], [Spotify, "run"], [Opera, "run"]];
const SIDE = [MagColor, Toolbox, Games, M365, Outlook];
const Tri = ({ down }) => (
  <svg width="12" height="10" viewBox="0 0 12 10"><path d={down ? "M1 1h10L6.500 9h-1z" : "M1 9h10L6.500 1h-1z"} fill="#858585" stroke="#858585" strokeLinejoin="round" /></svg>
);

export default function App() {
  return (
    <Screen>
      <Global />
      <TabStrip>
        <Slot $w={56}><Avatar /></Slot>
        <Slot $w={42}><Workspaces /></Slot>
        <Slot $w={61}><TabMenu /></Slot>
        <ActiveTab>
          <File size={21} strokeWidth={1.6} />
          <TabTitle><Text $ui $size={14.5} w={219} $color="#222">Builderz - Construction Company</Text></TabTitle>
          <Slot $w={28}><X size={17} strokeWidth={1.8} /></Slot>
        </ActiveTab>
        <Slot $w={44}><Plus size={22} strokeWidth={1.4} /></Slot>
        <Grow />
        <Slot $w={58}><Minus size={19} strokeWidth={1.4} /></Slot>
        <Slot $w={57}><Svg w={16} vb="0 0 16 16"><rect x="1.500" y="3" width="10.500" height="12" rx="2" /><path d="M4 1h8q2.500 0 2.500 2.500V12" /></Svg></Slot>
        <Slot $w={58}><X size={20} strokeWidth={1.4} /></Slot>
      </TabStrip>
      <Toolbar>
        <Slot $w={55}><ArrowLeft size={25} strokeWidth={1.4} /></Slot>
        <Slot $w={55}><RotateCw size={23} strokeWidth={1.5} /></Slot>
        <Address>
          <Info size={21} strokeWidth={1.3} color="#707070" />
          <Gap $w={10} />
          <Text $ui $size={16} w={25} $color="#707070">File</Text>
          <VLine $color="#8c8c8c" $m="0 16px 0 14px" />
          <Text $ui $size={16} w={567} $color="#111">C:/Users/nmedia/Desktop/Gotham/gothamHTMLCSSversion/contact.html</Text>
          <Grow />
          <Slot $w={49} $color="#666"><ReadAloud /></Slot>
          <Slot $w={50} $color="#666"><Star size={22} strokeWidth={1.3} /></Slot>
          <Gap $w={6} />
        </Address>
        <Gap $w={8} />
        <Slot $w={55}><ExtLogo /></Slot>
        <Slot $w={55}><Extensions /></Slot>
        <VLine $color="#cfcfcf" $m="0 1.500px 0 2px" />
        <Slot $w={55}><Split /></Slot>
        <Slot $w={55}><Favs /></Slot>
        <Slot $w={55}><Collections /></Slot>
        <Slot $w={55}><Heart /></Slot>
        <Slot $w={55}><Ellipsis size={22} strokeWidth={1.8} /></Slot>
        <Slot $w={52}><Copilot /></Slot>
      </Toolbar>
      <Workspace>
        <Gutter $left />
        <Page>
          <SiteHeader>
            <Nav>
              {NAV.map(([t, w]) => <Text key={t} $size={17.8} w={w} $color={t === "CONTACT" ? GREEN : "#fff"}>{t}</Text>)}
            </Nav>
            <Login><Text $size={20} w={52}>LogIn</Text></Login>
          </SiteHeader>
          <Heading><Text $size={63} $weight={700} $lh={72} $color={DARK} w={449}>For Any Query</Text></Heading>
          <Panels>
            <Shelters>
              <Text $size={36} $weight={500} $lh={44} w={201}>Our Shilters</Text>
              <Rule />
              <MapView />
            </Shelters>
            <FormPanel>
              <UserType>
                <Lowered><Text $size={19.8} w={168}>Select User Type:</Text></Lowered>
                <Gap $w={1} />
                <Radio $on /><Text $size={19.8} $lh={31} w={66}>Citizen</Text>
                <Gap $w={21} />
                <Radio /><Text $size={19.8} $lh={31} w={152}>First Responder</Text>
              </UserType>
              {FIELDS.map(([t, w]) => <Field key={t}><Text $size={20} w={w}>{t}</Text></Field>)}
              <Select>
                <Text $size={20} w={246}>Select Contact Category</Text>
                <ChevronDown size={14} strokeWidth={3.600} />
                <MenuShadow />
                <Menu>
                  {OPTIONS.map(([t, w], i) => <Option key={t} $on={i === 0}><Text $size={20} $lh={31} w={w}>{t}</Text></Option>)}
                </Menu>
              </Select>
              <Submit />
            </FormPanel>
          </Panels>
        </Page>
        <Gutter />
        <ScrollTrack><Tri /><Thumb /><Tri down /></ScrollTrack>
        <Side>
          {SIDE.map((I, i) => <Slot key={i} $w={55} $h={50}><I /></Slot>)}
          <SideLine $m="16px 0 13px" />
          <Slot $w={55} $h={50}><Plus size={21} strokeWidth={1.300} /></Slot>
          <SideLine $m="auto 0 3px" />
          <Slot $w={55} $h={50}><SidePanel /></Slot>
          <Slot $w={55} $h={50}><Settings size={22} strokeWidth={1.500} /></Slot>
        </Side>
      </Workspace>
      <BackTop><ChevronUp size={40} strokeWidth={3.200} /></BackTop>
      <Taskbar>
        <Weather>
          <Therm />
          <Gap $w={4} />
          <WeatherText>
            <Text $ui $size={14.500} $lh={22} w={29}>18°C</Text>
            <Arabic>سجل قريب</Arabic>
          </WeatherText>
        </Weather>
        <Slot $w={29} $h={57}><Windows /></Slot>
        <SearchBox><Search size={20} strokeWidth={2.200} /><Gap $w={12} /><Text $ui $size={16} w={51} $color="#5b5558">Search</Text></SearchBox>
        <Gap $w={2} />
        {APPS.map(([I, s], i) => <AppIcon key={i} $active={s === "active"}><I />{s && <Dot $active={s === "active"} />}</AppIcon>)}
        <Grow />
        <Slot $w={28} $h={56}><ChevronUp size={20} strokeWidth={1.800} /></Slot>
        <Gap $w={16} />
        <Stack $w={36}><Text $ui $size={14.500} $lh={20} w={28}>ENG</Text><Text $ui $size={14.500} $lh={20} w={15}>FR</Text></Stack>
        <Gap $w={15} />
        <Slot $w={29} $h={56}><WifiGlyph /></Slot>
        <Slot $w={30} $h={56}><VolumeX size={21} strokeWidth={1.500} /></Slot>
        <Slot $w={30} $h={56}><Battery /></Slot>
        <Gap $w={7} />
        <Stack $w={71} $align="flex-end"><Text $ui $size={14.500} $lh={20} w={54}>6:15 PM</Text><Text $ui $size={14.500} $lh={20} w={61}>2/5/2024</Text></Stack>
        <Slot $w={39} $h={58}><BellGlyph /></Slot>
        <Gap $w={14} />
      </Taskbar>
    </Screen>
  );
}
